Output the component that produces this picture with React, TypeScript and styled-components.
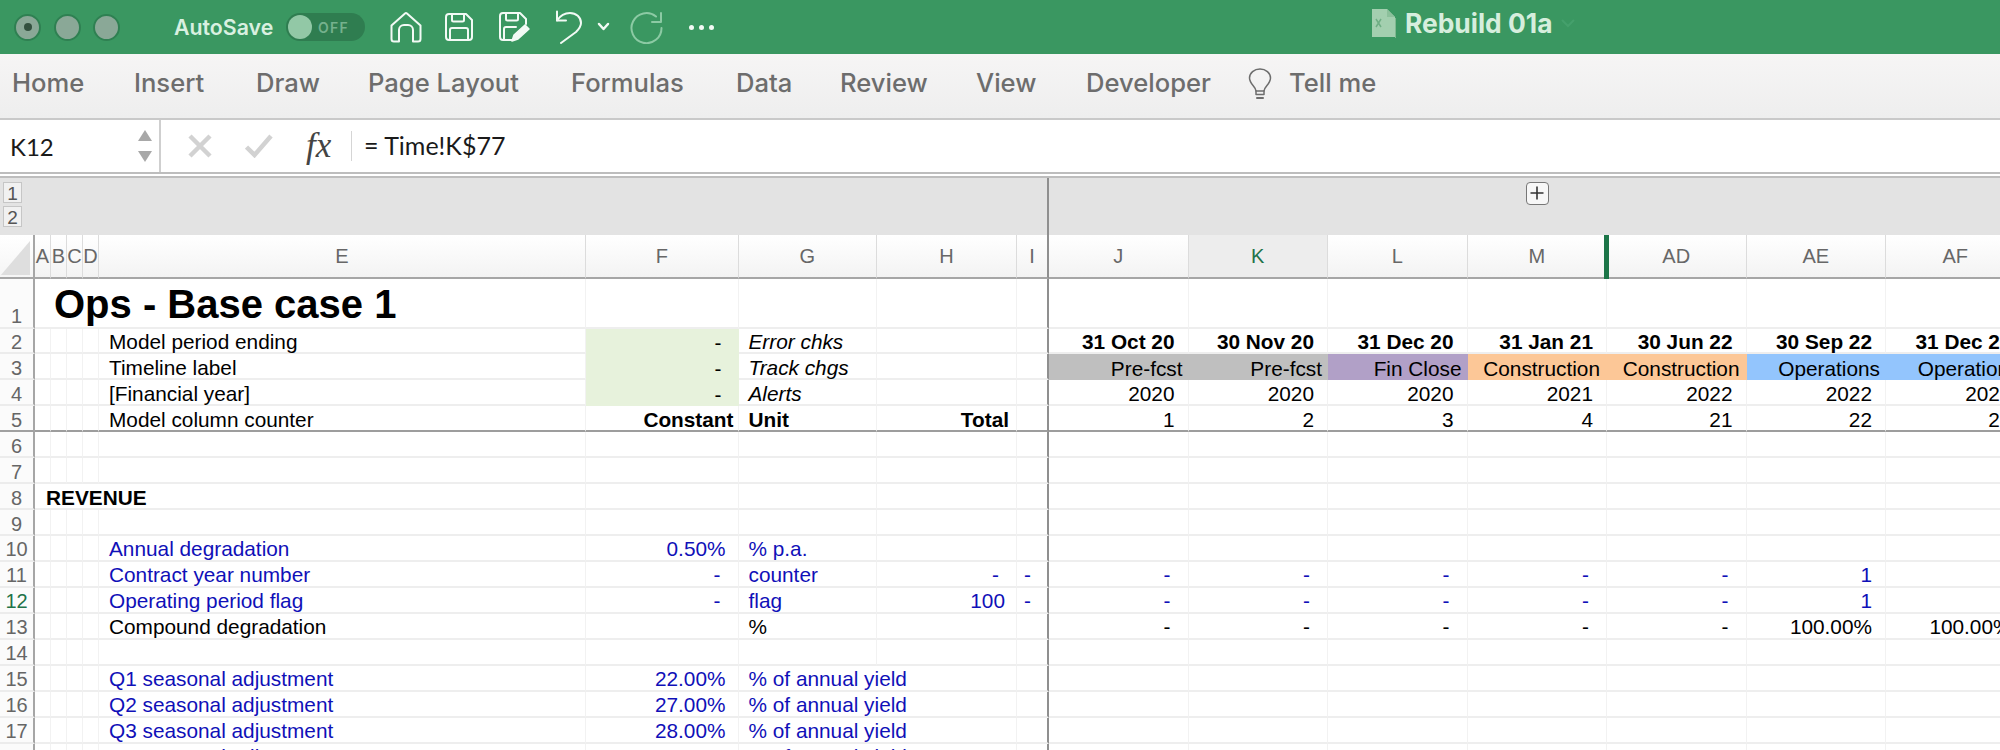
import React from "react";
import styled, { createGlobalStyle } from "styled-components";

const Global = createGlobalStyle`
  html, body { margin: 0; padding: 0; background: #fff; overflow: hidden; }
  #root { width: 2000px; height: 750px; overflow: hidden; }
`;

const Page = styled.div`
  width: 2000px;
  height: 750px;
  overflow: hidden;
  display: flex;
  flex-direction: column;
  font-family: "Liberation Sans", Arial, sans-serif;
`;

/* ---------- title bar ---------- */
const TitleBar = styled.header`
  height: 54px;
  flex: none;
  background: #3a9761;
  display: flex;
  align-items: center;
  padding-left: 14px;
  position: relative;
  font-family: Inter, sans-serif;
`;
const Lights = styled.div`
  display: flex;
  gap: 12.5px;
  width: 160px;
`;
const Light = styled.span`
  width: 27px;
  height: 27px;
  box-sizing: border-box;
  border-radius: 50%;
  background: #8aa897;
  border: 2px solid #2f8052;
  display: flex;
  align-items: center;
  justify-content: center;
`;
const LightDot = styled.span`
  width: 8px;
  height: 8px;
  border-radius: 50%;
  background: #33513f;
`;
const AutoSaveLabel = styled.span`
  color: #d9f0e0;
  font-size: 21.3px;
  font-weight: 600;
  width: 112px;
  white-space: nowrap;
`;
const Toggle = styled.div`
  width: 79px;
  height: 28px;
  border-radius: 14px;
  background: #2f7d50;
  display: flex;
  align-items: center;
  padding-left: 2px;
  box-sizing: border-box;
  gap: 6px;
  margin-right: 25px;
`;
const Knob = styled.span`
  width: 24px;
  height: 24px;
  border-radius: 50%;
  background: #92c8a6;
`;
const OffText = styled.span`
  color: #75b18d;
  font-size: 14px;
  font-weight: 600;
  letter-spacing: 1.2px;
`;
const QuickIcons = styled.div`
  display: flex;
  align-items: center;
`;
const IconSlot = styled.span<{ $w: number; $mr: number }>`
  width: ${(p) => p.$w}px;
  margin-right: ${(p) => p.$mr}px;
  display: flex;
  color: #f2faf5;
`;
const DocTitle = styled.div`
  position: absolute;
  left: 1371px;
  top: 0;
  height: 46px;
  display: flex;
  align-items: center;
  gap: 8px;
  color: #d6eedd;
  font-size: 26.4px;
  font-weight: 700;
  white-space: nowrap;
`;

/* ---------- ribbon tabs ---------- */
const Ribbon = styled.nav`
  height: 60px;
  flex: none;
  background: linear-gradient(#f6f5f5, #eeeeee);
  border-bottom: 2px solid #c9c9c9;
  display: flex;
  align-items: center;
  padding: 0 0 4px 12px;
  font-family: Inter, sans-serif;
`;
const Tab = styled.span<{ $w: number }>`
  width: ${(p) => p.$w}px;
  color: #6d6d6d;
  font-size: 25.6px;
  font-weight: 500;
  line-height: 30px;
  margin-top: -2px;
  white-space: nowrap;
  flex: none;
`;
const TellMe = styled(Tab)`
  margin-left: 17px;
`;
const BulbSvg = styled.svg`
  flex: none;
`;

/* ---------- formula bar ---------- */
const FormulaBar = styled.div`
  height: 52px;
  flex: none;
  background: #fff;
  display: flex;
  align-items: center;
  border-bottom: 6px double #bdbdbd;
  font-family: Lato, sans-serif;
  color: #1a1a1a;
  font-size: 24px;
`;
const NameBox = styled.div`
  width: 149px;
  height: 100%;
  flex: none;
  border-right: 2px solid #cfcfcf;
  display: flex;
  align-items: center;
  justify-content: space-between;
  padding-left: 10px;
  margin-right: 27px;
`;
const Stepper = styled.span`
  display: flex;
  flex-direction: column;
  gap: 10px;
  margin-right: 7px;
`;
const StepUp = styled.span<{ $down?: boolean }>`
  width: 0;
  height: 0;
  border-left: 7px solid transparent;
  border-right: 7px solid transparent;
  ${(p) =>
    p.$down
      ? "border-top: 11px solid #a8a8a8;"
      : "border-bottom: 11px solid #a8a8a8;"}
`;
const MarkSvg = styled.svg`
  flex: none;
`;
const CheckSvg = styled(MarkSvg)`
  margin-left: 33px;
`;
const FxLabel = styled.span`
  font-family: "Liberation Serif", serif;
  font-style: italic;
  font-size: 35px;
  color: #444;
  width: 45px;
  margin-left: 33px;
`;
const FxDivider = styled.span`
  width: 1px;
  height: 30px;
  background: #d5d5d5;
  margin-right: 12px;
`;
const FormulaText = styled.span`
  font-size: 25px;
  margin-top: -2px;
  white-space: pre;
`;

/* ---------- outline band ---------- */
const Band = styled.div`
  height: 57px;
  flex: none;
  background: #e3e3e3;
  display: flex;
`;
const BandLeft = styled.div`
  width: 1049px;
  box-sizing: border-box;
  border-right: 2px solid #8f8f8f;
  padding: 4px 0 0 3px;
  display: flex;
  flex-direction: column;
  gap: 3px;
`;
const BandRight = styled.div`
  flex: 1;
  padding: 4px 0 0 477px;
`;
const LevelButton = styled.span`
  width: 19px;
  height: 21px;
  background: #f1f1f1;
  border: 1px solid #c6c6c6;
  box-sizing: border-box;
  color: #555;
  font-size: 19px;
  line-height: 21px;
  text-align: center;
`;
const PlusButton = styled.span`
  width: 23px;
  height: 23px;
  box-sizing: border-box;
  display: block;
  background: #f7f7f7;
  border: 1.5px solid #777;
  border-radius: 4px;
`;

/* ---------- sheet ---------- */
const Sheet = styled.div`
  flex: none;
  width: 2025.5px;
  display: grid;
  grid-template-columns: 35px 16px 16px 16px 16px 487px 152.5px 138.5px 140px 32px repeat(7, 139.5px);
  grid-template-rows: 44px 49.5px repeat(17, 25.94px);
  font-size: 20.8px;
  color: #000;
`;
const Corner = styled.div`
  background: linear-gradient(#fff, #f5f5f5);
  border-right: 2px solid #a6a6a6;
  border-bottom: 2px solid #a6a6a6;
  box-sizing: border-box;
  display: flex;
  align-items: flex-end;
  padding: 0 0 2px 1px;
`;
const ColHead = styled.div<{ $active?: boolean; $mark?: boolean; $heavy?: boolean }>`
  position: relative;
  box-sizing: border-box;
  background: ${(p) => (p.$active ? "#ededed" : "linear-gradient(#fff, #f3f3f3)")};
  color: ${(p) => (p.$active ? "#1f7349" : "#676767")};
  border-right: ${(p) => (p.$heavy ? "2px solid #8f8f8f" : "1px solid #dcdcdc")};
  border-bottom: 2px solid #a6a6a6;
  font-size: 20px;
  display: flex;
  align-items: center;
  justify-content: center;
  ${(p) =>
    p.$mark
      ? `z-index: 1; &::after { content: ""; position: absolute; top: 0; bottom: -2px; right: -3px; width: 5px; background: #1c7548; }`
      : ""}
`;
const RowHead = styled.div<{ $active?: boolean; $rule?: boolean; $low?: boolean }>`
  box-sizing: border-box;
  background: #fbfbfb;
  color: ${(p) => (p.$active ? "#1f7349" : "#666")};
  border-right: 2px solid #a6a6a6;
  border-bottom: 2px solid ${(p) => (p.$rule ? "#a0a0a0" : "#ececec")};
  font-size: 20px;
  display: flex;
  justify-content: center;
  align-items: ${(p) => (p.$low ? "flex-end" : "center")};
  line-height: 1;
  overflow: hidden;
  padding-top: ${(p) => (p.$low ? "0" : "3px")};
  padding-bottom: ${(p) => (p.$low ? "1px" : "0")};
`;
const Cell = styled.div<{
  $span: number;
  $right?: boolean;
  $pad: number;
  $bold?: boolean;
  $italic?: boolean;
  $blue?: boolean;
  $fill?: string;
  $heavy?: boolean;
  $rule?: boolean;
}>`
  grid-column: span ${(p) => p.$span};
  box-sizing: border-box;
  min-width: 0;
  display: flex;
  align-items: center;
  white-space: nowrap;
  overflow: visible;
  justify-content: ${(p) => (p.$right ? "flex-end" : "flex-start")};
  padding: ${(p) => (p.$right ? `3px ${p.$pad}px 0 0` : `3px 0 0 ${p.$pad}px`)};
  font-weight: ${(p) => (p.$bold ? 700 : 400)};
  font-style: ${(p) => (p.$italic ? "italic" : "normal")};
  color: ${(p) => (p.$blue ? "#1010b8" : "#000")};
  background: ${(p) => p.$fill ?? "#fff"};
  border-right: ${(p) =>
    p.$heavy ? "2px solid #8f8f8f" : p.$fill ? "none" : "1px solid #f2f2f2"};
  border-bottom: ${(p) =>
    p.$rule ? "2px solid #9d9d9d" : p.$fill ? "none" : "2px solid #eeeeee"};
`;
const BigTitle = styled.span`
  font-size: 40px;
  font-weight: 700;
`;

/* ---------- data ---------- */
const COLS = ["A","B","C","D","E","F","G","H","I","J","K","L","M","AD","AE","AF"];
const HEADS = COLS;

type Spec = {
  t?: React.ReactNode;
  right?: boolean;
  pad?: number;
  bold?: boolean;
  italic?: boolean;
  blue?: boolean;
  fill?: string;
  span?: number;
};
type RowData = Record<string, Spec>;

const GREEN = "#e7f2dc";
const GREY = "#bfbfbf";
const PURPLE = "#b1a0c7";
const ORANGE = "#fcc797";
const BLUE = "#93c5fd";
const TIME = ["J","K","L","M","AD","AE","AF"];

const num = (t: string, extra: Spec = {}): Spec => ({ t, right: true, pad: 13, ...extra });
const dash = (extra: Spec = {}): Spec => ({ t: "-", right: true, pad: 17, ...extra });
const timeRow = (vals: string[], extra: Spec = {}): RowData =>
  Object.fromEntries(vals.map((v, i) => [TIME[i], num(v, extra)]));
const label = (t: string, blue = true): Spec => ({ t, pad: 10, blue });
const unit = (t: string, blue = true, span = 1): Spec => ({ t, pad: 10, blue, span });
const dashesBlue = (): RowData =>
  Object.fromEntries(TIME.slice(0, 5).map((c) => [c, dash({ blue: true })]));

const ROWS: RowData[] = [
  { A: { t: <BigTitle>Ops - Base case 1</BigTitle>, pad: 19, span: 5 } },
  {
    E: { t: "Model period ending", pad: 10 },
    F: dash({ fill: GREEN }),
    G: { t: "Error chks", pad: 10, italic: true },
    ...timeRow(["31 Oct 20","30 Nov 20","31 Dec 20","31 Jan 21","30 Jun 22","30 Sep 22","31 Dec 22"], { bold: true }),
  },
  {
    E: { t: "Timeline label", pad: 10 },
    F: dash({ fill: GREEN }),
    G: { t: "Track chgs", pad: 10, italic: true },
    J: num("Pre-fcst", { fill: GREY, pad: 6 }),
    K: num("Pre-fcst", { fill: GREY, pad: 6 }),
    L: num("Fin Close", { fill: PURPLE, pad: 6 }),
    M: num("Construction", { fill: ORANGE, pad: 7 }),
    AD: num("Construction", { fill: ORANGE, pad: 7 }),
    AE: num("Operations", { fill: BLUE, pad: 6 }),
    AF: num("Operations", { fill: BLUE, pad: 6 }),
  },
  {
    E: { t: "[Financial year]", pad: 10 },
    F: dash({ fill: GREEN }),
    G: { t: "Alerts", pad: 10, italic: true },
    ...timeRow(["2020","2020","2020","2021","2022","2022","2022"]),
  },
  {
    E: { t: "Model column counter", pad: 10 },
    F: { t: "Constant", right: true, pad: 4, bold: true },
    G: { t: "Unit", pad: 10, bold: true },
    H: { t: "Total", right: true, pad: 7, bold: true },
    ...timeRow(["1","2","3","4","21","22","23"]),
  },
  {},
  {},
  { A: { t: "REVENUE", pad: 11, bold: true, span: 5 } },
  {},
  {
    E: label("Annual degradation"),
    F: num("0.50%", { blue: true, pad: 12 }),
    G: unit("% p.a."),
  },
  {
    E: label("Contract year number"),
    F: dash({ blue: true }),
    G: unit("counter"),
    H: dash({ blue: true }),
    I: dash({ blue: true, pad: 16 }),
    ...dashesBlue(),
    AE: num("1", { blue: true }),
  },
  {
    E: label("Operating period flag"),
    F: dash({ blue: true }),
    G: unit("flag"),
    H: num("100", { blue: true, pad: 11 }),
    I: dash({ blue: true, pad: 16 }),
    ...dashesBlue(),
    AE: num("1", { blue: true }),
  },
  {
    E: label("Compound degradation", false),
    G: unit("%", false),
    J: dash(), K: dash(), L: dash(), M: dash(), AD: dash(),
    AE: num("100.00%"),
    AF: num("100.00%"),
  },
  {},
  { E: label("Q1 seasonal adjustment"), F: num("22.00%", { blue: true, pad: 12 }), G: unit("% of annual yield", true, 2) },
  { E: label("Q2 seasonal adjustment"), F: num("27.00%", { blue: true, pad: 12 }), G: unit("% of annual yield", true, 2) },
  { E: label("Q3 seasonal adjustment"), F: num("28.00%", { blue: true, pad: 12 }), G: unit("% of annual yield", true, 2) },
  { E: label("Q4 seasonal adjustment"), F: num("23.00%", { blue: true, pad: 12 }), G: unit("% of annual yield", true, 2) },
];

/* ---------- icons ---------- */
const stroke = { fill: "none", stroke: "currentColor", strokeWidth: 2, strokeLinecap: "round", strokeLinejoin: "round" } as const;

const HomeIcon = () => (
  <svg width="32" height="32" viewBox="0 0 32 32" {...stroke}>
    <path d="M1.5 14.5 15 2.5a1.5 1.5 0 0 1 2 0l13.5 12v13.5a2.5 2.5 0 0 1-2.5 2.5h-5V19a5 5 0 0 0-5-5h-4a5 5 0 0 0-5 5v11.500H4a2.500 2.500 0 0 1-2.500-2.500z" />
  </svg>
);
const SaveIcon = () => (
  <svg width="28" height="28" viewBox="0 0 28 28" {...stroke}>
    <path d="M4 1h17l6 6v17a3 3 0 0 1-3 3H4a3 3 0 0 1-3-3V4a3 3 0 0 1 3-3z" />
    <path d="M7 1v6a1.500 1.500 0 0 0 1.500 1.500h9A1.500 1.500 0 0 0 19 7V1" />
    <path d="M5 27V17a2 2 0 0 1 2-2h14a2 2 0 0 1 2 2v10" />
  </svg>
);
const SaveAsIcon = () => (
  <svg width="32" height="30" viewBox="0 0 32 30" {...stroke}>
    <path d="M14 28H4a3 3 0 0 1-3-3V4a3 3 0 0 1 3-3h17l6 6v5" />
    <path d="M7 1v6a1.500 1.500 0 0 0 1.500 1.500h9A1.500 1.500 0 0 0 19 7V1" />
    <path d="M5 27V17a2 2 0 0 1 2-2h10" />
    <path d="M13 29l2-6 11-10 4 4-11 10z" fill="currentColor" strokeWidth="1.500" />
  </svg>
);
const UndoIcon = () => (
  <svg width="28" height="34" viewBox="0 0 28 34" {...stroke}>
    <path d="M2 1.500v9h9" />
    <path d="M2 10.500C5 6 9 3 15 3c6 0 11 4 11 10 0 4-2 6-5 9L6 33" />
  </svg>
);
const Chevron = () => (
  <svg width="13" height="10" viewBox="0 0 13 10" fill="none" stroke="currentColor" strokeWidth="2.500" strokeLinecap="round" strokeLinejoin="round">
    <path d="M2 2l4.500 5L11 2" />
  </svg>
);
const RedoIcon = () => (
  <svg width="33" height="33" viewBox="0 0 33 33" fill="none" stroke="#8ccaa4" strokeWidth="2" strokeLinecap="round" strokeLinejoin="round">
    <path d="M26 5.500A15 15 0 1 0 31.500 17" />
    <path d="M31 2v9h-9" />
  </svg>
);
const Dots = () => (
  <svg width="27" height="7" viewBox="0 0 27 7" fill="currentColor">
    <circle cx="3.500" cy="3.500" r="2.500" />
    <circle cx="13.500" cy="3.500" r="2.500" />
    <circle cx="23.500" cy="3.500" r="2.500" />
  </svg>
);
const DocIcon = () => (
  <svg width="26" height="30" viewBox="0 0 26 30">
    <path d="M1 1h15l8 8v20H1z" fill="#a3cfaf" />
    <path d="M16 1v8h8z" fill="#8cc09b" />
    <path d="M24.500 10v20" stroke="#7fb990" strokeWidth="1" />
    <path d="M5 11l5 8M10 11l-5 8" stroke="#6fae84" strokeWidth="1.500" fill="none" />
  </svg>
);
const TitleChevron = () => (
  <svg width="16" height="10" viewBox="0 0 16 10" fill="none" stroke="#45a06c" strokeWidth="2">
    <path d="M2 2l6 6 6-6" />
  </svg>
);
const Bulb = () => (
  <BulbSvg width="24" height="32" viewBox="0 0 24 32" fill="none" stroke="#6d6d6d" strokeWidth="1.500" strokeLinecap="round" strokeLinejoin="round">
    <path d="M8 23c0-4-6.500-7-6.500-13a10.500 9 0 0 1 21 0c0 6-6.500 9-6.500 13z" />
    <path d="M8 23v3.500h8V23" />
    <path d="M9 30h6" strokeWidth="2" />
  </BulbSvg>
);
const XMark = () => (
  <MarkSvg width="24" height="24" viewBox="0 0 24 24" stroke="#d2d2d2" strokeWidth="4.500" fill="none">
    <path d="M2 2l20 20M22 2L2 22" />
  </MarkSvg>
);
const CheckMark = () => (
  <CheckSvg width="28" height="24" viewBox="0 0 28 24" stroke="#d2d2d2" strokeWidth="4.500" fill="none">
    <path d="M1.500 13l8 8L26 2" />
  </CheckSvg>
);
const Plus = () => (
  <svg width="20" height="20" viewBox="0 0 20 20" stroke="#333" strokeWidth="1.600" fill="none">
    <path d="M10 3.500v13M3.500 10h13" />
  </svg>
);
const CornerTriangle = () => (
  <svg width="30" height="34" viewBox="0 0 30 34">
    <path d="M0 34L29 0v34z" fill="#dedede" />
  </svg>
);

const TABS: [string, number][] = [
  ["Home", 122], ["Insert", 122], ["Draw", 112], ["Page Layout", 203], ["Formulas", 165],
  ["Data", 104], ["Review", 136], ["View", 110], ["Developer", 162],
];

export default function App() {
  return (
    <Page>
      <Global />
      <TitleBar>
        <Lights>
          <Light><LightDot /></Light>
          <Light />
          <Light />
        </Lights>
        <AutoSaveLabel>AutoSave</AutoSaveLabel>
        <Toggle><Knob /><OffText>OFF</OffText></Toggle>
        <QuickIcons>
          <IconSlot $w={32} $mr={23}><HomeIcon /></IconSlot>
          <IconSlot $w={28} $mr={26}><SaveIcon /></IconSlot>
          <IconSlot $w={32} $mr={24}><SaveAsIcon /></IconSlot>
          <IconSlot $w={28} $mr={14}><UndoIcon /></IconSlot>
          <IconSlot $w={13} $mr={20}><Chevron /></IconSlot>
          <IconSlot $w={33} $mr={25}><RedoIcon /></IconSlot>
          <IconSlot $w={27} $mr={0}><Dots /></IconSlot>
        </QuickIcons>
        <DocTitle>
          <DocIcon />
          <span>Rebuild 01a</span>
          <TitleChevron />
        </DocTitle>
      </TitleBar>

      <Ribbon>
        {TABS.map(([t, w]) => <Tab key={t} $w={w}>{t}</Tab>)}
        <Bulb />
        <TellMe $w={90}>Tell me</TellMe>
      </Ribbon>

      <FormulaBar>
        <NameBox>
          <span>K12</span>
          <Stepper><StepUp /><StepUp $down /></Stepper>
        </NameBox>
        <XMark />
        <CheckMark />
        <FxLabel>fx</FxLabel>
        <FxDivider />
        <FormulaText>= Time!K$77</FormulaText>
      </FormulaBar>

      <Band>
        <BandLeft>
          <LevelButton>1</LevelButton>
          <LevelButton>2</LevelButton>
        </BandLeft>
        <BandRight>
          <PlusButton><Plus /></PlusButton>
        </BandRight>
      </Band>

      <Sheet>
        <Corner><CornerTriangle /></Corner>
        {HEADS.map((h) => (
          <ColHead key={h} $active={h === "K"} $mark={h === "M"} $heavy={h === "I"}>{h}</ColHead>
        ))}
        {ROWS.map((row, i) => {
          const n = i + 1;
          const rule = n === 5;
          const cells: React.ReactNode[] = [];
          let c = 0;
          while (c < COLS.length) {
            const col = COLS[c];
            const spec = row[col] ?? {};
            const span = spec.span ?? 1;
            const last = COLS[c + span - 1];
            cells.push(
              <Cell
                key={col}
                $span={span}
                $right={spec.right}
                $pad={spec.pad ?? 0}
                $bold={spec.bold}
                $italic={spec.italic}
                $blue={spec.blue}
                $fill={spec.fill}
                $heavy={last === "I"}
                $rule={rule}
              >
                {spec.t}
              </Cell>
            );
            c += span;
          }
          return (
            <React.Fragment key={n}>
              <RowHead $active={n === 12} $rule={rule} $low={n === 1}>{n}</RowHead>
              {cells}
            </React.Fragment>
          );
        })}
      </Sheet>
    </Page>
  );
}
